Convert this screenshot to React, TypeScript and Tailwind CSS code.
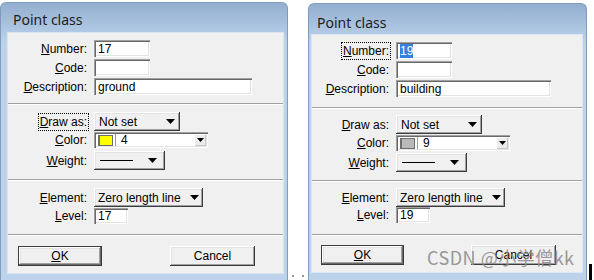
import type { ReactNode } from "react";

const sunken =
  "bg-white shadow-[inset_1px_1px_0_#a0a0a0,inset_2px_2px_0_#696969,inset_-1px_-1px_0_#ffffff,inset_-2px_-2px_0_#e3e3e3]";
const raised =
  "bg-[#f0f0f0] shadow-[inset_-1px_-1px_0_#3c3c3c,inset_1px_1px_0_#ffffff,inset_-2px_-2px_0_#a0a0a0,inset_2px_2px_0_#e3e3e3]";
const raisedDefault =
  "bg-[#f0f0f0] shadow-[inset_-1px_-1px_0_#696969,inset_1px_1px_0_#ffffff,inset_-2px_-2px_0_#a0a0a0,inset_2px_2px_0_#e3e3e3]";

type Cfg = {
  frame: string;
  title: string;
  panel: string;
  lw: string;
  descW: string;
  sep1: string;
  drawAs: string;
  color: string;
  weight: string;
  sep2: string;
  elem: string;
  level: string;
  sep3: string;
  btns: string;
  okW: string;
  cancel: string;
  number: ReactNode;
  description: string;
  swatch: string;
  colorNo: string;
  levelNo: string;
  focusNumber?: boolean;
  focusDraw?: boolean;
};

function Arrow({ small }: { small?: boolean }) {
  return small ? (
    <svg width="7" height="4" viewBox="0 0 7 4">
      <path d="M0 0h7L3.5 4z" fill="#000" />
    </svg>
  ) : (
    <svg width="9" height="5" viewBox="0 0 9 5">
      <path d="M0 0h9L4.5 5z" fill="#000" />
    </svg>
  );
}

function U({ children }: { children: ReactNode }) {
  return <span className="underline decoration-1 underline-offset-[1px]">{children}</span>;
}

function Row({ lw, label, focus, className = "", children }: { lw: string; label: ReactNode; focus?: boolean; className?: string; children: ReactNode }) {
  return (
    <div className={`flex items-center ${className}`}>
      <div className={`${lw} shrink-0 pr-[7px] text-right`}>
        <span className={focus ? "outline-1 outline-offset-1 outline-dotted outline-black" : ""}>{label}</span>
      </div>
      {children}
    </div>
  );
}

function Sep({ className }: { className: string }) {
  return <div className={`h-0 border-t border-b border-t-[#a0a0a0] border-b-white ${className}`} />;
}

function Dialog({ c }: { c: Cfg }) {
  return (
    <div className={`flex shrink-0 flex-col rounded-t-[6px] border-x border-t border-[#7f9cbf] bg-[linear-gradient(180deg,#93aecf_0px,#b2cae5_30px,#bcd3eb_40px)] ${c.frame}`}>
      <div className={`pl-[5px] font-['Noto_Sans',sans-serif] text-[14px] leading-[16px] text-[#1e1e1e] ${c.title}`}>Point class</div>
      <div className={`flex flex-col bg-[#f0f0f0] pt-[7px] text-[12px] leading-[14px] text-black shadow-[0_0_0_1px_#dbe6f2] ${c.panel}`}>
        <Row lw={c.lw} focus={c.focusNumber} label={<><U>N</U>umber:</>}>
          <div className={`h-[17px] w-[56px] pl-[4px] pt-[2px] ${sunken}`}>{c.number}</div>
        </Row>
        <Row lw={c.lw} className="mt-[2px]" label={<><U>C</U>ode:</>}>
          <div className={`h-[17px] w-[56px] ${sunken}`} />
        </Row>
        <Row lw={c.lw} className="mt-[2px]" label={<><U>D</U>escription:</>}>
          <div className={`h-[17px] pl-[4px] pt-[2px] ${c.descW} ${sunken}`}>{c.description}</div>
        </Row>
        <Sep className={c.sep1} />
        <Row lw={c.lw} className={c.drawAs} focus={c.focusDraw} label={<><U>D</U>raw as:</>}>
          <div className={`flex h-[19px] w-[86px] items-center justify-between pl-[5px] pr-[5px] ${raised}`}>
            <span>Not set</span>
            <Arrow />
          </div>
        </Row>
        <Row lw={c.lw} className={c.color} label={<><U>C</U>olor:</>}>
          <div className={`flex h-[16px] w-[114px] items-center pl-[4px] pr-[2px] ${sunken}`}>
            <div className={`h-[11px] w-[15px] border border-l-2 border-[#6e6e6e] ${c.swatch}`} />
            <div className="ml-[2px] h-[12px] w-px bg-[#9a9a9a]" />
            <span className="ml-[5px]">{c.colorNo}</span>
            <div className="ml-auto flex h-[11px] w-[11px] items-center justify-center bg-[#ececec] shadow-[inset_-1px_-1px_0_#c8c8c8]">
              <Arrow small />
            </div>
          </div>
        </Row>
        <Row lw={c.lw} className={c.weight} label={<><U>W</U>eight:</>}>
          <div className={`flex h-[19px] w-[71px] items-center pl-[6px] pr-[8px] ${raised}`}>
            <div className="h-px w-[33px] bg-black" />
            <div className="ml-auto">
              <Arrow />
            </div>
          </div>
        </Row>
        <Sep className={c.sep2} />
        <Row lw={c.lw} className={c.elem} label={<><U>E</U>lement:</>}>
          <div className={`flex h-[19px] w-[109px] items-center justify-between pl-[4px] pr-[4px] ${raised}`}>
            <span>Zero length line</span>
            <Arrow />
          </div>
        </Row>
        <Row lw={c.lw} className={c.level} label={<><U>L</U>evel:</>}>
          <div className={`h-[16px] w-[34px] pl-[4px] pt-[1px] ${sunken}`}>{c.levelNo}</div>
        </Row>
        <Sep className={c.sep3} />
        <div className={`flex ${c.btns}`}>
          <div className={`flex h-[20px] items-center justify-center border border-[#3c3c3c] ${c.okW} ${raisedDefault}`}>
            <U>O</U>K
          </div>
          <div className={`flex h-[20px] w-[85px] items-center justify-center ${c.cancel} ${raised}`}>Cancel</div>
        </div>
      </div>
    </div>
  );
}

const left: Cfg = {
  frame: "mt-[2px] h-[278px] w-[288px] pl-[7px] pr-[4px]",
  title: "h-[30px] pt-[9px]",
  panel: "h-[240px]",
  lw: "w-[86px]",
  descW: "w-[158px]",
  sep1: "mt-[8px]",
  drawAs: "mt-[7px]",
  color: "mt-[1px]",
  weight: "mt-[3px]",
  sep2: "mt-[9px]",
  elem: "mt-[7px]",
  level: "mt-[1px]",
  sep3: "mt-[10px]",
  btns: "mt-[10px] pl-[10px]",
  okW: "w-[84px]",
  cancel: "ml-[68px]",
  number: "17",
  description: "ground",
  swatch: "bg-[#ffff00]",
  colorNo: "4",
  levelNo: "17",
  focusDraw: true,
};

const right: Cfg = {
  frame: "mt-[3px] h-[277px] w-[279px] pl-[3px] pr-[4px]",
  title: "h-[31px] pt-[11px]",
  panel: "h-[237px]",
  lw: "w-[84px]",
  descW: "w-[155px]",
  sep1: "mt-[10px]",
  drawAs: "mt-[6px]",
  color: "mt-[1px]",
  weight: "mt-[2px]",
  sep2: "mt-[8px]",
  elem: "mt-[6px]",
  level: "mt-0",
  sep3: "mt-[11px]",
  btns: "mt-[9px] pl-[9px]",
  okW: "w-[83px]",
  cancel: "ml-[67px]",
  number: <span className="bg-[#3382e0] text-white">19</span>,
  description: "building",
  swatch: "bg-[#b9b9b9]",
  colorNo: "9",
  levelNo: "19",
  focusNumber: true,
};

export default function App() {
  return (
    <div className="relative flex h-[280px] w-[594px] overflow-hidden bg-white font-['Liberation_Sans',Arial,sans-serif]">
      <Dialog c={left} />
      <div className="flex w-[20px] shrink-0 items-end gap-[8px] pb-[3px] pl-[4px]">
        <div className="h-[2px] w-[2px] rounded-full bg-[#777]" />
        <div className="h-[2px] w-[2px] rounded-full bg-[#777]" />
      </div>
      <Dialog c={right} />
      <div className="ml-[2px] h-[16px] w-[3px] self-end bg-black" />
      <div className="absolute left-[427px] top-[245px] whitespace-nowrap font-['Noto_Sans_CJK_SC',sans-serif] text-[18px] leading-[24px] tracking-[0.5px] text-[#8f8f8f] opacity-90">
        CSDN @小学僧kk
      </div>
    </div>
  );
}
